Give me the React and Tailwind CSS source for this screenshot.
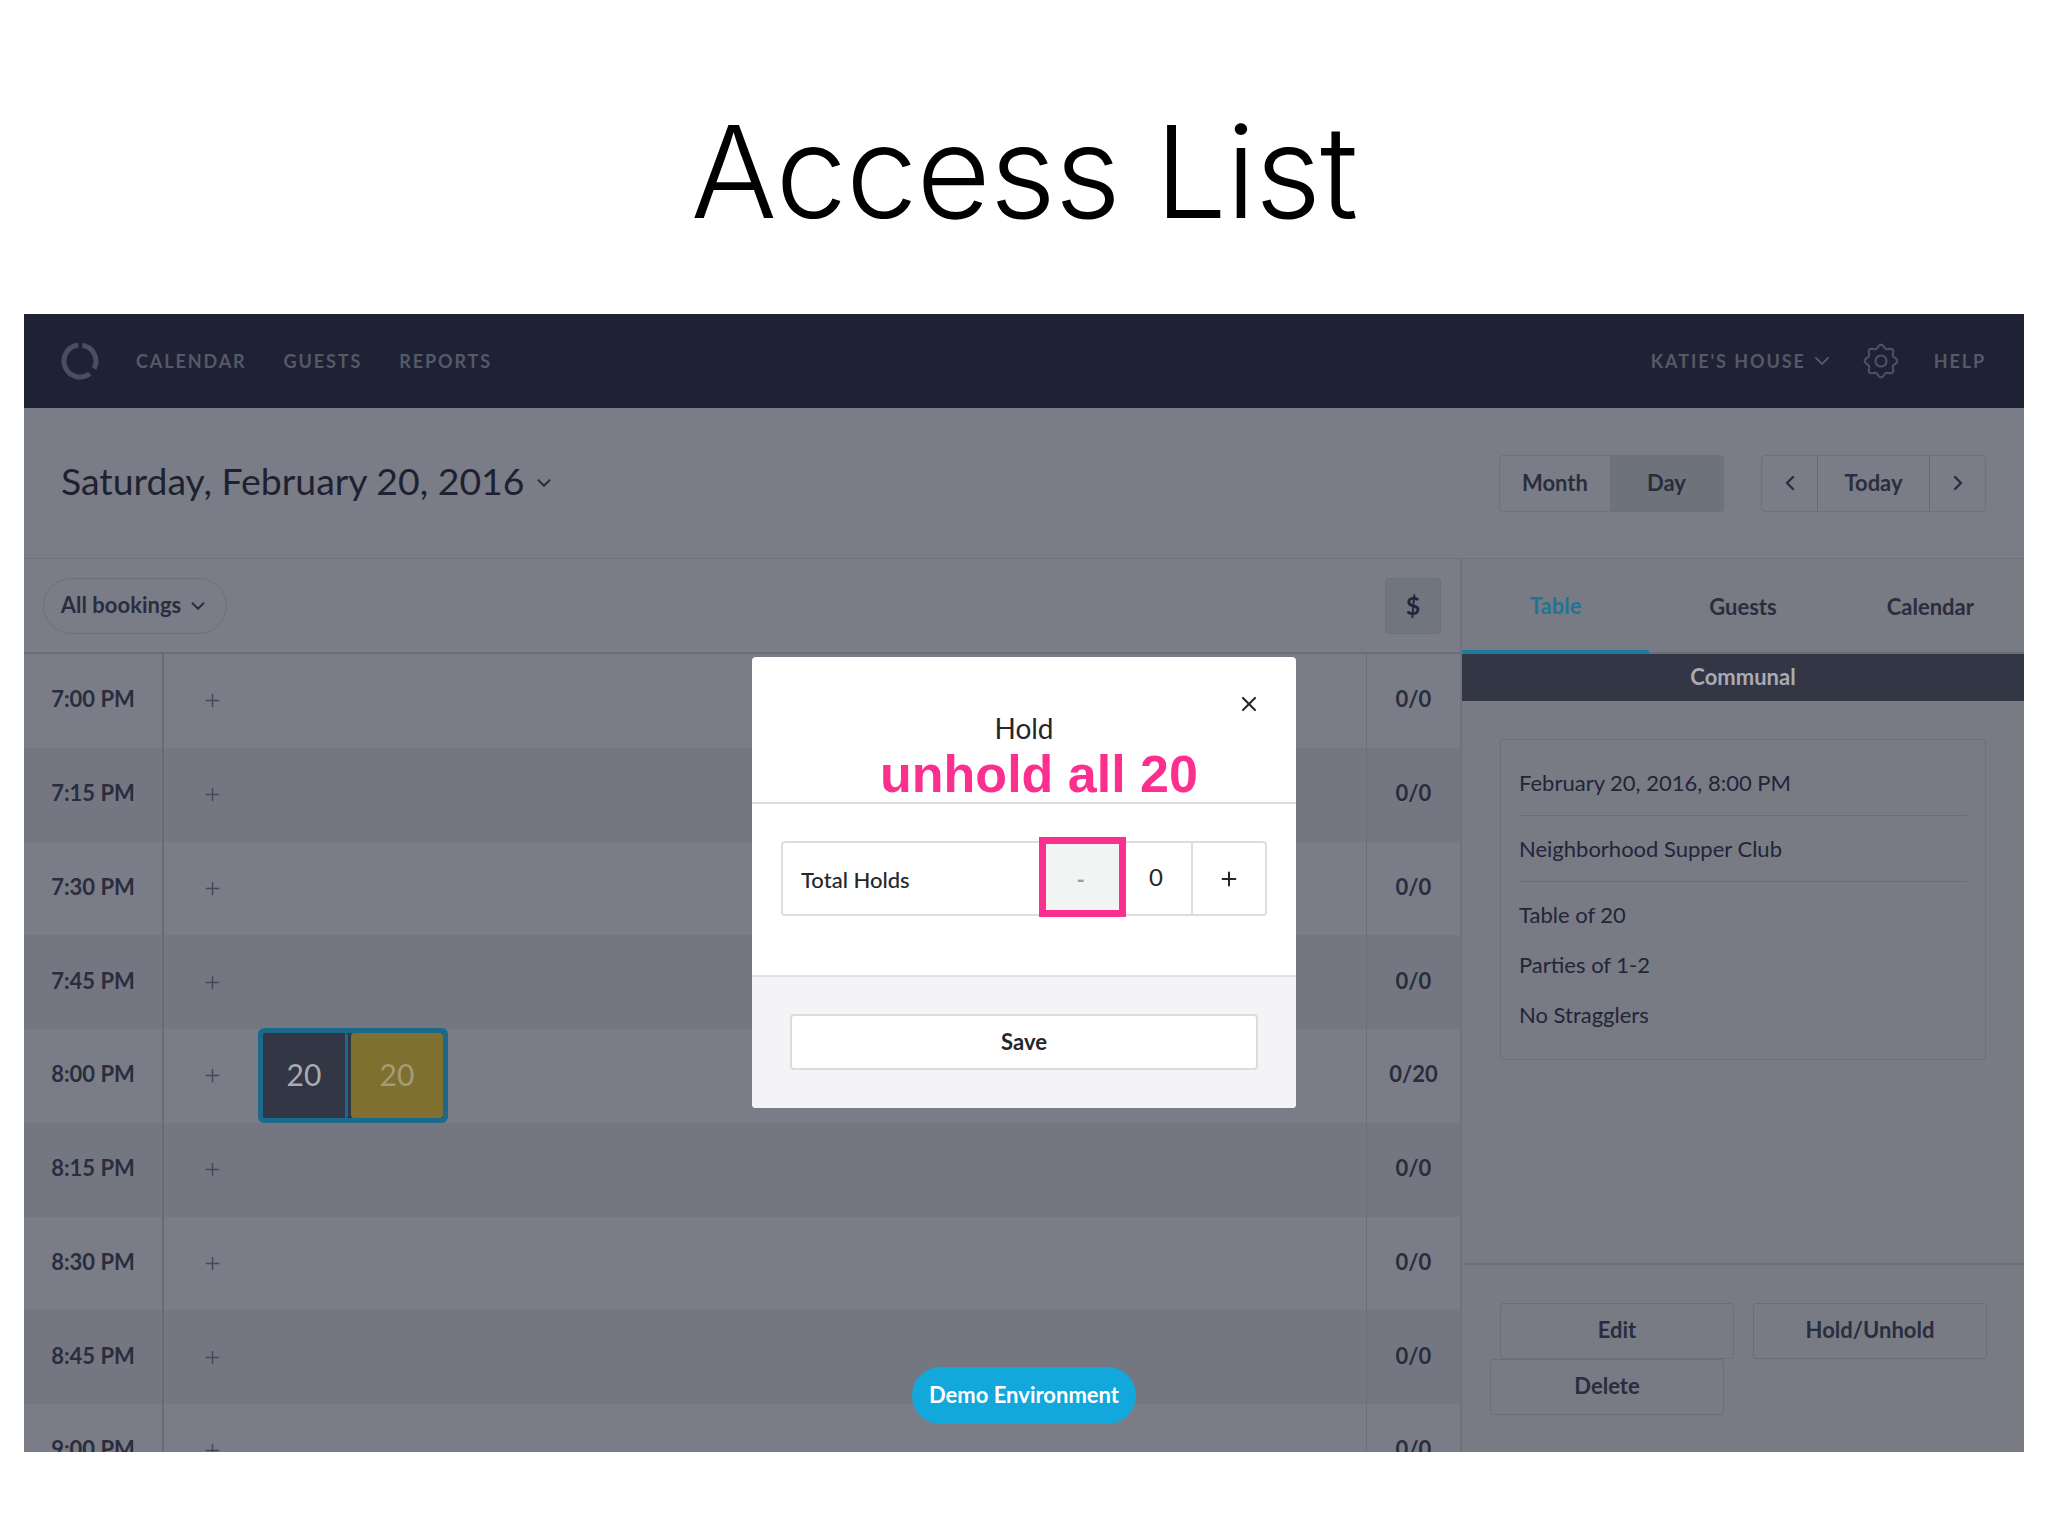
import { ChevronDown, ChevronLeft, ChevronRight, Plus, X } from "lucide-react";

const rows = [
  { time: "7:00 PM", seats: "0/0" },
  { time: "7:15 PM", seats: "0/0" },
  { time: "7:30 PM", seats: "0/0" },
  { time: "7:45 PM", seats: "0/0" },
  { time: "8:00 PM", seats: "0/20", booking: true },
  { time: "8:15 PM", seats: "0/0" },
  { time: "8:30 PM", seats: "0/0" },
  { time: "8:45 PM", seats: "0/0" },
  { time: "9:00 PM", seats: "0/0" },
];

// wavy outline of the gear, eight rounded lobes
const gearPath =
  Array.from({ length: 96 }, (_, i) => {
    const a = (i / 96) * Math.PI * 2;
    const r = 14.6 + 1.7 * Math.cos(8 * a);
    const x = 18 + r * Math.sin(a);
    const y = 18 - r * Math.cos(a);
    return `${i === 0 ? "M" : "L"}${x.toFixed(2)} ${y.toFixed(2)}`;
  }).join(" ") + " Z";

const Gear = () => (
  <svg className="ml-[29px]" width="36" height="36" viewBox="0 0 36 36" fill="none" stroke="#4d5161" strokeWidth="2.1">
    <path d={gearPath} />
    <circle cx="18" cy="18" r="5.5" />
  </svg>
);

const Logo = () => (
  <svg width="40" height="40" viewBox="0 0 40 40" fill="none" stroke="#4a4e5e" strokeWidth="5">
    <path d="M18.3 4.1A16 16 0 1 0 29.85 32.6" />
    <path d="M22.2 4.2A16 16 0 0 1 34.1 27.5" />
  </svg>
);

const TopBar = () => (
  <header className="flex h-[94px] shrink-0 items-center bg-[#1f2235] pl-[36px] pr-[38px] text-[18px] font-bold tracking-[1.9px] text-[#555968]">
    <Logo />
    <nav className="ml-[36px] flex gap-[37px]">
      <span>CALENDAR</span>
      <span>GUESTS</span>
      <span>REPORTS</span>
    </nav>
    <div className="ml-auto flex items-center">
      <span>KATIE'S HOUSE</span>
      <ChevronDown className="ml-[4px]" size={24} strokeWidth={1.8} />
      <Gear />
      <span className="ml-[35px]">HELP</span>
    </div>
  </header>
);

const DateBar = () => (
  <div className="flex h-[151px] shrink-0 items-center border-b border-[#70737d] pl-[37px] pr-[38px]">
    <h2 className="mb-[5px] text-[37.4px] leading-none text-[#1e2130]">Saturday, February 20, 2016</h2>
    <ChevronDown className="ml-[9px] text-[#2a2d3a]" size={22} strokeWidth={2.2} />
    <div className="ml-auto flex h-[57px] w-[225px] overflow-hidden rounded-[4px] border border-[#6e717b] text-[22px] font-bold text-[#2a2d3e]">
      <div className="flex w-[110px] items-center justify-center pb-[2px]">Month</div>
      <div className="flex flex-1 items-center justify-center bg-[#6d727b] pb-[2px]">Day</div>
    </div>
    <div className="ml-[37px] flex h-[57px] w-[225px] rounded-[4px] border border-[#6e717b] text-[22px] font-bold text-[#2a2d3e]">
      <div className="flex w-[56px] items-center justify-center border-r border-[#666974]">
        <ChevronLeft size={24} strokeWidth={2.4} />
      </div>
      <div className="flex flex-1 items-center justify-center pb-[2px]">Today</div>
      <div className="flex w-[56px] items-center justify-center border-l border-[#666974]">
        <ChevronRight size={24} strokeWidth={2.4} />
      </div>
    </div>
  </div>
);

const Booking = () => (
  <div className="ml-[35px] flex h-[95px] w-[190px] rounded-[6px] border-[5px] border-[#1c6a8b] bg-[#333644] text-[30px] font-normal">
    <div className="flex w-[85px] items-center justify-center rounded-[3px] border-r-[3px] border-[#1c6a8b] pb-[3px] text-[#a9abb3]">20</div>
    <div className="ml-[3px] flex flex-1 items-center justify-center rounded-[3px] bg-[#80702f] pb-[3px] text-[#a49b78]">20</div>
  </div>
);

const Schedule = () => (
  <div className="w-[1436px] shrink-0">
    <div className="flex h-[95px] items-center justify-between border-b-2 border-[#6a6d77] pl-[19px] pr-[19px]">
      <div className="flex h-[56px] w-[184px] items-center justify-center gap-[6px] rounded-full border border-[#6d707a] pb-[2px] text-[22px] font-bold text-[#2a2d3e]">
        All bookings
        <ChevronDown className="mt-[2px]" size={22} strokeWidth={2.2} />
      </div>
      <div className="flex h-[56px] w-[56px] items-center justify-center rounded-[4px] border border-[#6d707a] bg-[#71757e] text-[25px] font-bold text-[#23263a]">
        $
      </div>
    </div>
    {rows.map((row, i) => (
      <div
        key={row.time}
        className={`flex h-[93.75px] items-center text-[22px] font-bold text-[#2a2d3e] ${i % 2 ? "bg-[#747781]" : "bg-[#7a7d87]"}`}
      >
        <div className="flex h-full w-[140px] items-center justify-center border-r-2 border-[#686b75] pb-1">{row.time}</div>
        <div className="flex h-full flex-1 items-center pl-[38px]">
          <Plus className="text-[#454857]" size={21} strokeWidth={1.7} />
          {row.booking && <Booking />}
        </div>
        <div className="flex h-full w-[94px] items-center justify-center border-l border-[#6c6f79] pb-1">{row.seats}</div>
      </div>
    ))}
  </div>
);

const SidePanel = () => (
  <aside className="flex h-full flex-1 flex-col border-l-2 border-[#6f727c] bg-[#787a84]">
    <div className="flex h-[95px] shrink-0 text-[22px] font-bold text-[#2a2d3e]">
      <div className="flex flex-1 items-center justify-center border-b-4 border-[#1e7c9f] pt-[2px] text-[#1e7693]">Table</div>
      <div className="flex flex-1 items-center justify-center border-b-2 border-[#6a6d77] pt-[2px]">Guests</div>
      <div className="flex flex-1 items-center justify-center border-b-2 border-[#6a6d77] pt-[2px]">Calendar</div>
    </div>
    <div className="flex h-[47px] shrink-0 items-center justify-center bg-[#333644] pb-[2px] text-[22px] font-bold text-[#a9abb3]">Communal</div>
    <div className="mx-[38px] mt-[38px] h-[321px] rounded-[3px] border border-[#6d707a] px-[18px] text-[22px] text-[#22253a]">
      <div className="flex h-[76px] items-center border-b border-[#6b6e78] pt-[10px]">February 20, 2016, 8:00 PM</div>
      <div className="flex h-[66px] items-center border-b border-[#6b6e78]">Neighborhood Supper Club</div>
      <div className="mt-[7px] flex h-[50px] items-center">Table of 20</div>
      <div className="flex h-[50px] items-center">Parties of 1-2</div>
      <div className="flex h-[50px] items-center">No Stragglers</div>
    </div>
    <div className="mt-[203px] flex flex-wrap gap-x-[19px] border-t-2 border-[#6d707a] pl-[38px] pt-[38px] text-[22px] font-bold text-[#2a2d3e]">
      <div className="flex h-[56px] w-[234px] items-center justify-center rounded-[3px] border border-[#6b6e78] pb-1">Edit</div>
      <div className="flex h-[56px] w-[234px] items-center justify-center rounded-[3px] border border-[#6b6e78] pb-1">Hold/Unhold</div>
      <div className="-ml-[10px] flex h-[56px] w-[234px] items-center justify-center rounded-[3px] border border-[#6b6e78] pb-1">Delete</div>
    </div>
  </aside>
);

const HoldModal = () => (
  <div className="absolute left-[728px] top-[343px] flex h-[451px] w-[544px] flex-col rounded-[4px] bg-white text-[#25262c]">
    <div className="relative h-[147px] shrink-0 border-b-2 border-[#dcdcdf] pt-[54px] text-center">
      <X className="absolute right-[35px] top-[35px] text-[#2b2c33]" size={24} strokeWidth={2.2} />
      <div className="text-[28px] leading-[34px]">Hold</div>
      <div className="pl-[30px] font-['Liberation_Sans',sans-serif] text-[52px] font-bold leading-[58px] text-[#fd2f8e]">
        unhold all 20
      </div>
    </div>
    <div className="h-[173px] shrink-0 border-b-2 border-[#e2e2e5] px-[29px] pt-[37px]">
      <div className="relative flex h-[75px] items-center rounded-[4px] border-2 border-[#dddde0] text-[22px]">
        <span className="ml-[18px] pt-[2px] font-medium">Total Holds</span>
        <div className="ml-auto flex h-full w-[180px] items-center">
          <div className="absolute left-[256px] top-[-6px] flex h-[80px] w-[87px] items-center justify-center border-[7px] border-[#fd2f8e] bg-[#f2f3f3] pr-[4px] pt-[4px] text-[22px] font-bold text-[#9c9ea3]">
            -
          </div>
          <div className="ml-auto flex h-full w-[66px] items-center justify-center pb-1 pr-[4px] text-[24px]">0</div>
          <div className="flex h-full w-[74px] items-center justify-center border-l-2 border-[#dddde0]">
            <Plus size={22} strokeWidth={2.2} />
          </div>
        </div>
      </div>
    </div>
    <div className="flex-1 rounded-b-[4px] bg-[#f4f4f7] px-[38px] pt-[37px]">
      <div className="flex h-[56px] items-center justify-center rounded-[4px] border-2 border-[#dcdce0] bg-white pb-[2px] text-[22px] font-bold text-[#25262c]">
        Save
      </div>
    </div>
  </div>
);

const App = () => {
  return (
    <div className="flex h-[1536px] w-[2048px] flex-col overflow-hidden bg-white font-['Lato',sans-serif]">
      <div className="flex h-[314px] shrink-0 items-start justify-center">
        <h1 className="mt-[95px] font-['Inter',sans-serif] text-[128px] font-[280] leading-[154px] tracking-[-1px] text-black">Access List</h1>
      </div>
      <div className="relative mx-[24px] flex h-[1138px] shrink-0 flex-col overflow-hidden bg-[#7a7d87]">
        <TopBar />
        <DateBar />
        <div className="flex min-h-0 flex-1 overflow-hidden">
          <Schedule />
          <SidePanel />
        </div>
        <HoldModal />
        <div className="absolute left-[888px] top-[1053px] flex h-[57px] w-[224px] items-center justify-center rounded-full bg-[#12a8dc] pb-[2px] text-[22px] font-bold text-white">
          Demo Environment
        </div>
      </div>
    </div>
  );
};

export default App;
